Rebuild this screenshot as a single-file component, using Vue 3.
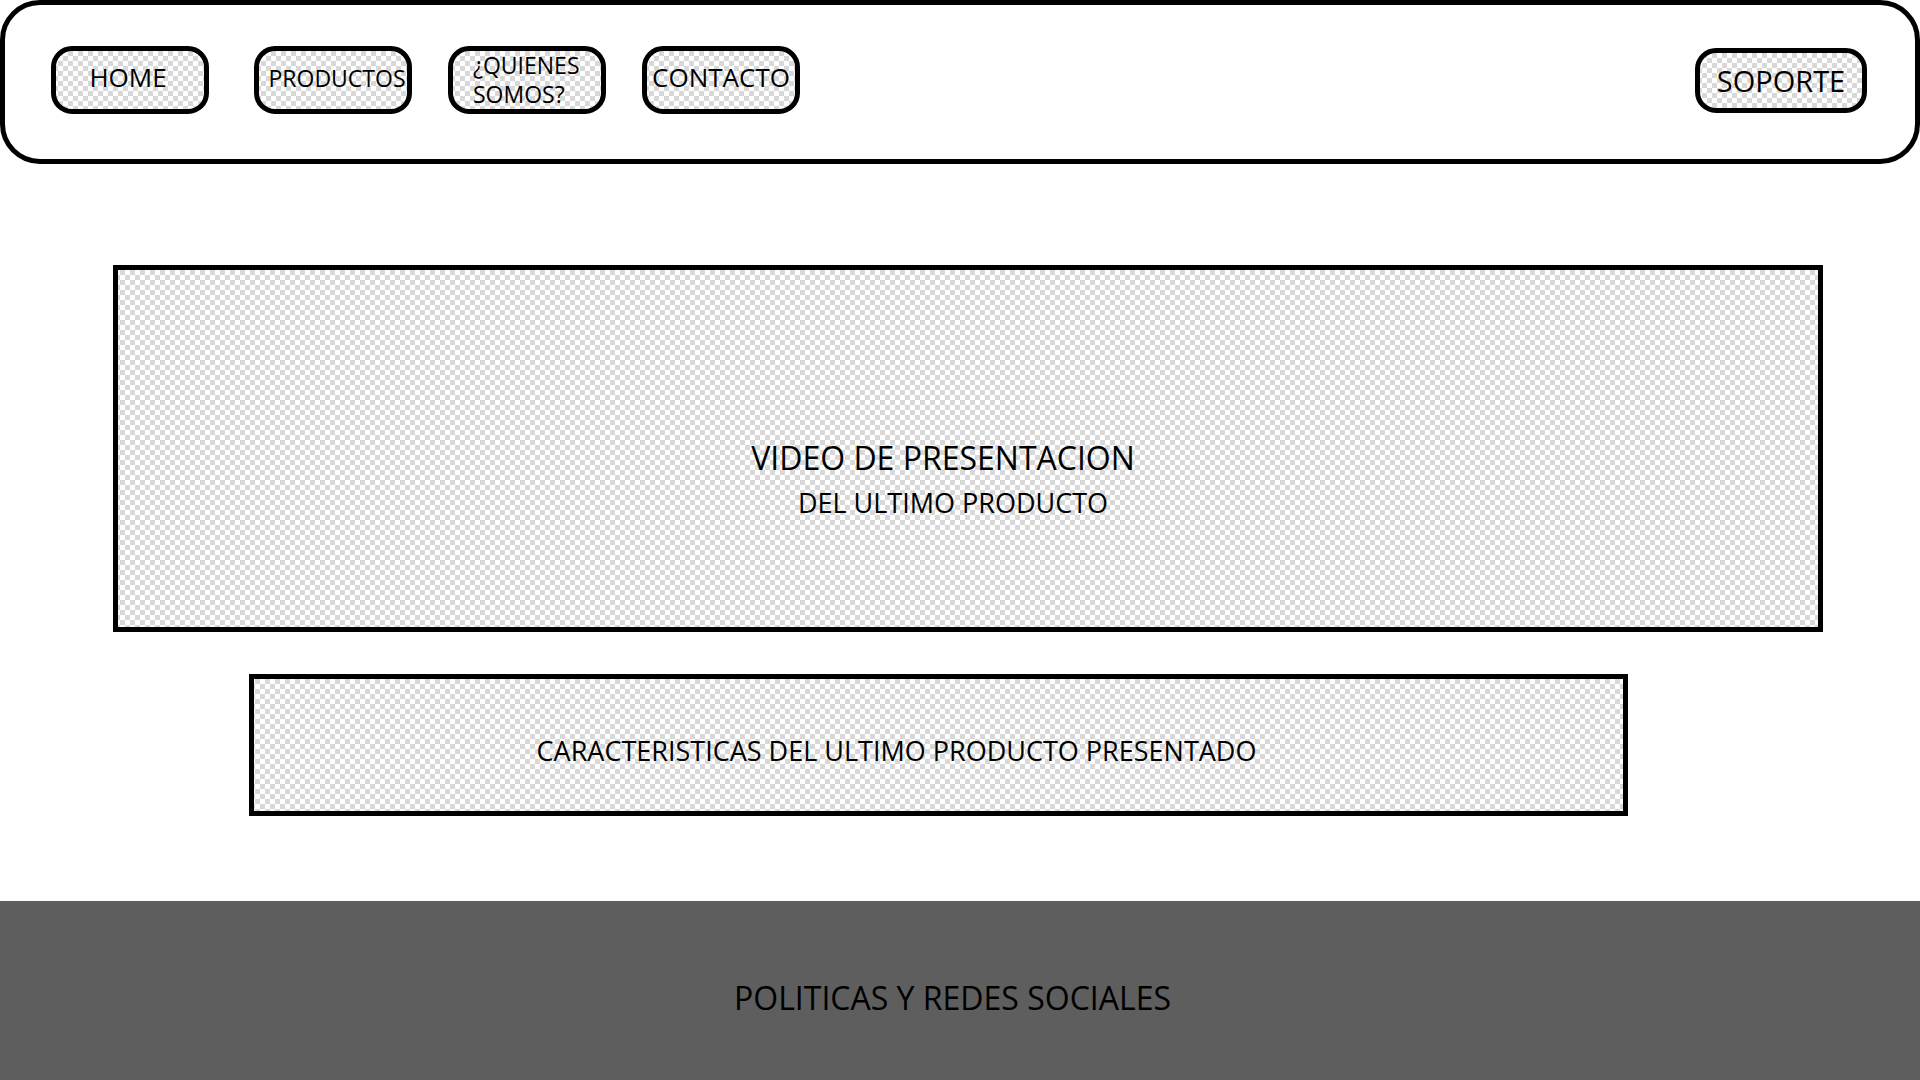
<script setup>
const links = [
  { id: 'home', label: 'HOME', size: 'md' },
  { id: 'productos', label: 'PRODUCTOS', size: 'sm' },
  { id: 'quienes', label: '¿QUIENES SOMOS?', size: 'sm' },
  { id: 'contacto', label: 'CONTACTO', size: 'md' },
]
</script>

<template>
  <div class="page">
    <header class="header">
      <nav class="nav">
        <button
          v-for="link in links"
          :key="link.id"
          type="button"
          class="btn checker"
          :class="[link.id, link.size]"
        >{{ link.label }}</button>
      </nav>
      <button type="button" class="btn checker soporte">SOPORTE</button>
    </header>

    <main class="main">
      <section class="video checker">
        <h1 class="title">VIDEO DE PRESENTACION</h1>
        <p class="subtitle">DEL ULTIMO PRODUCTO</p>
      </section>
      <section class="features checker">
        <h2 class="subtitle">CARACTERISTICAS DEL ULTIMO PRODUCTO PRESENTADO</h2>
      </section>
    </main>

    <footer class="footer">
      <p class="title">POLITICAS Y REDES SOCIALES</p>
    </footer>
  </div>
</template>

<style>
body {
  margin: 0;
  background: #fff;
}
</style>

<style scoped>
.page {
  display: flex;
  flex-direction: column;
  min-height: 100vh;
  font-family: 'Open Sans', 'Noto Sans', sans-serif;
  color: #000;
}

.checker {
  background: repeating-conic-gradient(#fff 0 25%, #d8d8d8 0 50%) 2px 0 / 10px 10px;
}

.header {
  display: flex;
  justify-content: space-between;
  align-items: flex-start;
  box-sizing: border-box;
  min-height: 164px;
  padding: 41px 48px 0 46px;
  border: 5px solid #000;
  border-radius: 40px;
}

.nav {
  display: flex;
  gap: 36px;
}

.btn {
  box-sizing: border-box;
  width: 158px;
  height: 68px;
  padding: 0;
  border: 5px solid #000;
  border-radius: 21px;
  font-family: inherit;
  color: inherit;
  white-space: nowrap;
  cursor: pointer;
}

.md {
  padding-bottom: 6px;
  font-size: 26px;
  line-height: 36px;
}

.sm {
  padding-bottom: 4px;
  font-size: 23px;
  line-height: 29px;
}

.home {
  margin-right: 9px;
  padding-right: 4px;
}

.productos {
  padding-left: 8px;
}

.quienes {
  padding-left: 20px;
  text-align: left;
  white-space: normal;
}

.soporte {
  width: 172px;
  height: 65px;
  margin-top: 2px;
  font-size: 29px;
  line-height: 36px;
}

.main {
  flex: 1;
  padding: 101px 97px 85px 113px;
}

.video {
  box-sizing: border-box;
  min-height: 367px;
  padding: 165px 50px 0 0;
  border: 5px solid #000;
  text-align: center;
}

.title {
  margin: 0;
  font-size: 32px;
  line-height: 45px;
  font-weight: 400;
}

.subtitle {
  margin: 0;
  font-size: 27px;
  line-height: 45px;
  font-weight: 400;
}

.video .subtitle {
  padding-left: 20px;
}

.features {
  box-sizing: border-box;
  min-height: 142px;
  margin: 42px 195px 0 136px;
  padding: 49px 84px 0 0;
  border: 5px solid #000;
  background-position: 1px 0;
  text-align: center;
}

.footer {
  box-sizing: border-box;
  min-height: 179px;
  padding: 74px 15px 0 0;
  background: #5e5e5e;
  text-align: center;
}
</style>
